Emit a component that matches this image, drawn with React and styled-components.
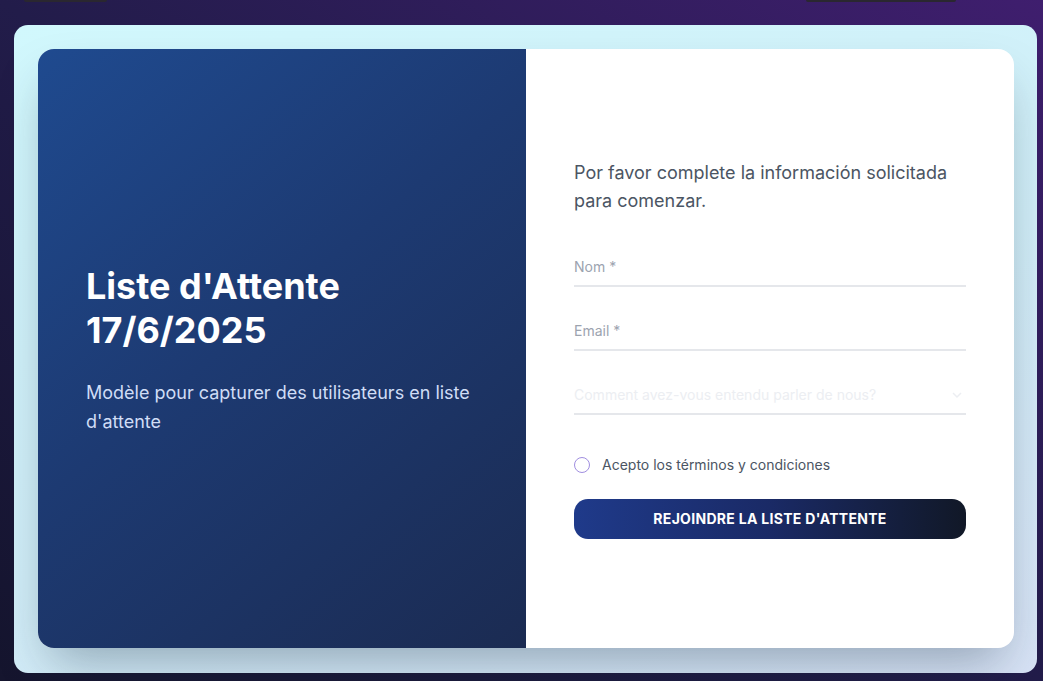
import React from "react";
import styled, { createGlobalStyle } from "styled-components";

const Global = createGlobalStyle`
  html, body { margin: 0; padding: 0; }
  body {
    font-family: Inter, "Noto Sans", sans-serif;
    background: linear-gradient(to top right, #15152e 0%, #221c4a 50%, #3f1e6e 100%);
    min-height: 681px;
    overflow: hidden;
  }
  * { box-sizing: border-box; }
`;

const Page = styled.div`
  width: 1043px;
  height: 681px;
  display: flex;
  flex-direction: column;
`;

const TopStrip = styled.div`
  height: 25px;
  display: flex;
  align-items: flex-start;
`;

const Stub = styled.div`
  height: 2px;
  width: ${(p) => p.$w}px;
  margin-left: ${(p) => p.$ml}px;
  background: #2a2730;
  border-radius: 0 0 3px 3px;
`;

const Shell = styled.div`
  margin: 0 6px 0 14px;
  height: 648px;
  padding: 24px 23px 25px 24px;
  border-radius: 14px;
  background: linear-gradient(160deg, #d1f8fd 0%, #d1eef8 55%, #d8e3f6 100%);
`;

const Card = styled.div`
  height: 599px;
  display: grid;
  grid-template-columns: 488px 488px;
  border-radius: 16px;
  overflow: hidden;
  background: #ffffff;
  box-shadow: 0 25px 50px -12px rgba(20, 40, 60, 0.35);
`;

const Hero = styled.section`
  background: linear-gradient(140deg, #1f4a8f 0%, #1d3a72 45%, #1b2b52 100%);
  padding: 3px 48px 0;
  display: flex;
  flex-direction: column;
  justify-content: center;
`;

const Title = styled.h1`
  margin: 0;
  font-size: 36px;
  line-height: 44px;
  font-weight: 700;
  color: #ffffff;
`;

const Lead = styled.p`
  margin: 26px 0 0;
  font-size: 18px;
  line-height: 29px;
  color: #d0ddf6;
`;

const FormSide = styled.section`
  padding: 0 48px;
  display: flex;
  flex-direction: column;
  justify-content: center;
`;

const Intro = styled.p`
  margin: 0 0 34px;
  font-size: 18px;
  line-height: 28px;
  color: #4b5563;
`;

const Field = styled.label`
  display: flex;
  align-items: center;
  justify-content: space-between;
  height: 38px;
  border-bottom: 2px solid #e5e7eb;
  margin-bottom: 26px;
  font-size: 14px;
  color: ${(p) => (p.$faint ? "#eceef2" : "#9ca3af")};

  &:last-of-type {
    margin-bottom: 0;
  }
`;

const Chevron = styled.svg`
  width: 12px;
  height: 12px;
  margin-right: 3px;
  color: #eceef2;
`;

const CheckRow = styled.div`
  display: flex;
  align-items: center;
  gap: 12px;
  height: 20px;
  margin-top: 40px;
  font-size: 14px;
  color: #4b5563;
`;

const Radio = styled.span`
  width: 16px;
  height: 16px;
  border-radius: 50%;
  border: 1.5px solid #a08ee0;
`;

const Button = styled.button`
  margin-top: 24px;
  height: 40px;
  border: none;
  border-radius: 14px;
  background: linear-gradient(90deg, #1f3a8a 0%, #1a2a66 50%, #111827 100%);
  color: #ffffff;
  font-family: Inter, sans-serif;
  font-size: 14px;
  font-weight: 700;
  letter-spacing: 0.3px;
`;

export default function App() {
  return (
    <Page>
      <Global />
      <TopStrip>
        <Stub $ml={24} $w={83} />
        <Stub $ml={699} $w={150} />
      </TopStrip>
      <Shell>
        <Card>
          <Hero>
            <Title>
              Liste d'Attente
              <br />
              17/6/2025
            </Title>
            <Lead>Modèle pour capturer des utilisateurs en liste d'attente</Lead>
          </Hero>
          <FormSide>
            <Intro>Por favor complete la información solicitada para comenzar.</Intro>
            <Field>Nom *</Field>
            <Field>Email *</Field>
            <Field $faint>
              Comment avez-vous entendu parler de nous?
              <Chevron viewBox="0 0 12 12" fill="none" stroke="currentColor" strokeWidth="1.5">
                <path d="M2 4l4 4 4-4" />
              </Chevron>
            </Field>
            <CheckRow>
              <Radio />
              Acepto los términos y condiciones
            </CheckRow>
            <Button>REJOINDRE LA LISTE D'ATTENTE</Button>
          </FormSide>
        </Card>
      </Shell>
    </Page>
  );
}
